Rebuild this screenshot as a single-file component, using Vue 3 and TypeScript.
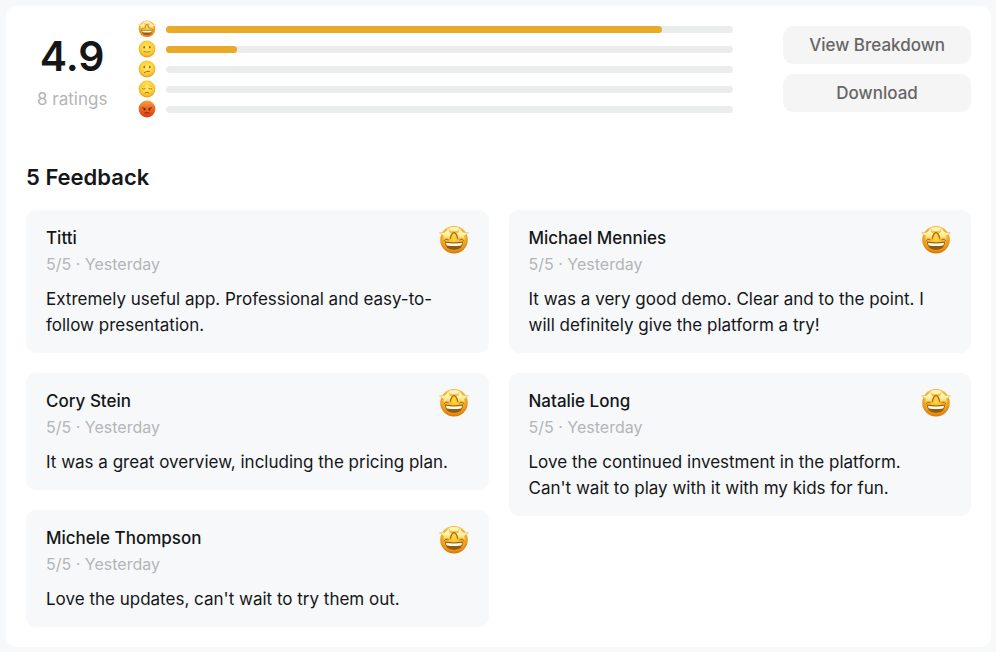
<script setup lang="ts">
import { computed } from 'vue'

type Mood = 'star' | 'smile' | 'unsure' | 'sad' | 'angry'

interface Feedback {
  name: string
  rating: number
  date: string
  text: string
}

const breakdown: { mood: Mood; label: string; count: number }[] = [
  { mood: 'star', label: '5 out of 5', count: 7 },
  { mood: 'smile', label: '4 out of 5', count: 1 },
  { mood: 'unsure', label: '3 out of 5', count: 0 },
  { mood: 'sad', label: '2 out of 5', count: 0 },
  { mood: 'angry', label: '1 out of 5', count: 0 },
]

const total = computed(() => breakdown.reduce((sum, row) => sum + row.count, 0))

const feedback: Feedback[] = [
  { name: 'Titti', rating: 5, date: 'Yesterday', text: 'Extremely useful app. Professional and easy-to-follow presentation.' },
  { name: 'Michael Mennies', rating: 5, date: 'Yesterday', text: 'It was a very good demo. Clear and to the point. I will definitely give the platform a try!' },
  { name: 'Cory Stein', rating: 5, date: 'Yesterday', text: 'It was a great overview, including the pricing plan.' },
  { name: 'Natalie Long', rating: 5, date: 'Yesterday', text: "Love the continued investment in the platform. Can't wait to play with it with my kids for fun." },
  { name: 'Michele Thompson', rating: 5, date: 'Yesterday', text: "Love the updates, can't wait to try them out." },
]

// Cards alternate between the two columns
const columns = computed(() => [0, 1].map((c) => feedback.filter((_, i) => i % 2 === c)))
</script>

<template>
  <main class="panel">
    <svg class="sprite" width="0" height="0" aria-hidden="true">
      <defs>
        <radialGradient id="ball" cx="50%" cy="42%" r="56%">
          <stop offset="0" stop-color="#ffe766" />
          <stop offset="0.55" stop-color="#ffd845" />
          <stop offset="0.85" stop-color="#f9b926" />
          <stop offset="1" stop-color="#eb981c" />
        </radialGradient>
        <radialGradient id="deep" cx="50%" cy="36%" r="64%">
          <stop offset="0" stop-color="#fbd03c" />
          <stop offset="0.5" stop-color="#f8c02f" />
          <stop offset="0.8" stop-color="#eb9a1c" />
          <stop offset="1" stop-color="#d4720c" />
        </radialGradient>
        <linearGradient id="fury" x1="0" y1="0" x2="0" y2="1">
          <stop offset="0" stop-color="#f7a33c" />
          <stop offset="0.45" stop-color="#ee6a25" />
          <stop offset="1" stop-color="#dc3a0c" />
        </linearGradient>
        <linearGradient id="gleam" x1="0" y1="0" x2="0" y2="1">
          <stop offset="0" stop-color="#fffbe0" />
          <stop offset="0.5" stop-color="#fff1a8" />
          <stop offset="1" stop-color="#fbd04a" />
        </linearGradient>
      </defs>
      <symbol id="mood-star" viewBox="0 0 30 30">
        <circle cx="15" cy="14.7" r="13.8" fill="url(#deep)" />
        <path d="M7.8 4.4Q9.6 2 15 2T22.2 4.4Q19 6 15 6T7.8 4.4Z" fill="#fff3bc" />
        <path d="M9.8 3.4L10.8 7.4L14.4 8.3L11.5 11.2L11.4 15L8.1 12.9L3.9 14.8L4.5 10.9L.5 7.8L6 7.2Z" fill="url(#gleam)" stroke="#eaa936" stroke-width=".5" stroke-linejoin="round" />
        <path d="M20.2 3.4L19.2 7.4L15.6 8.3L18.5 11.2L18.6 15L21.9 12.9L26.1 14.8L25.5 10.9L29.5 7.8L24 7.2Z" fill="url(#gleam)" stroke="#eaa936" stroke-width=".5" stroke-linejoin="round" />
        <path d="M11.3 13.4Q12.6 7.6 15 7.6T18.7 13.4" fill="none" stroke="#a9640d" stroke-width="1.2" stroke-linecap="round" />
        <path d="M13.7 10.2Q15 8.4 16.3 10.2V15.4H13.7Z" fill="#ffd23e" />
        <path d="M5 15.8Q6.4 13 9.4 14.8M25 15.8Q23.6 13 20.6 14.8" fill="none" stroke="#b06a10" stroke-width="1" stroke-linecap="round" />
        <path d="M6 16.6Q15 18.2 24 16.6Q24 24.8 15 25Q6 24.8 6 16.6Z" fill="#925a0b" />
        <path d="M7 17.7Q15 19.1 23 17.7Q23 19.8 22 20.4Q15 21.5 8 20.4Q7 19.8 7 17.7Z" fill="#fffaf0" />
      </symbol>
      <symbol id="mood-smile" viewBox="0 0 18 18">
        <circle cx="9" cy="9" r="8.4" fill="url(#ball)" />
        <ellipse cx="6.2" cy="7.3" rx=".75" ry="1.2" fill="#8d5b12" />
        <ellipse cx="11.8" cy="7.3" rx=".75" ry="1.2" fill="#8d5b12" />
        <path d="M5.9 11.6Q9 13 12.1 11.6" fill="none" stroke="#a46f18" stroke-width=".8" stroke-linecap="round" />
      </symbol>
      <symbol id="mood-unsure" viewBox="0 0 18 18">
        <circle cx="9" cy="9" r="8.4" fill="url(#ball)" />
        <ellipse cx="6.2" cy="7" rx=".75" ry="1.2" fill="#8d5b12" />
        <ellipse cx="11.8" cy="7" rx=".75" ry="1.2" fill="#8d5b12" />
        <path d="M6.4 12.5Q8 11.2 11.6 11.3" fill="none" stroke="#96600f" stroke-width=".9" stroke-linecap="round" />
      </symbol>
      <symbol id="mood-sad" viewBox="0 0 18 18">
        <circle cx="9" cy="9" r="8.4" fill="url(#ball)" />
        <path d="M4.2 8.7Q5.7 9.7 7.1 8.6M10.9 8.6Q12.3 9.7 13.8 8.7M6.9 12.9Q9 11.3 11.1 12.9" fill="none" stroke="#a46f18" stroke-width=".9" stroke-linecap="round" />
        <path d="M4 6.5Q5.6 6.2 6.6 5.2M14 6.5Q12.4 6.2 11.4 5.2" fill="none" stroke="#dba02e" stroke-width=".5" stroke-linecap="round" />
      </symbol>
      <symbol id="mood-angry" viewBox="0 0 18 18">
        <circle cx="9" cy="9" r="8.4" fill="url(#fury)" />
        <ellipse cx="6.4" cy="9.6" rx=".8" ry="1" fill="#5a1d08" />
        <ellipse cx="11.6" cy="9.6" rx=".8" ry="1" fill="#5a1d08" />
        <path d="M4.4 7.7Q6.4 7.8 7.7 9M13.6 7.7Q11.6 7.8 10.3 9M7 13Q9 11.9 11 13" fill="none" stroke="#74260c" stroke-width=".9" stroke-linecap="round" />
      </symbol>
    </svg>

    <section class="summary" aria-label="Rating summary">
      <div class="score">
        <strong class="score-value">4.9</strong>
        <span class="score-count">{{ total }} ratings</span>
      </div>
      <ul class="breakdown">
        <li v-for="row in breakdown" :key="row.mood" class="row">
          <svg class="mood" role="img" :aria-label="row.label"><use :href="`#mood-${row.mood}`" /></svg>
          <div class="track">
            <div v-if="row.count" class="fill" :style="{ width: `${(row.count / total) * 100}%` }"></div>
          </div>
        </li>
      </ul>
      <div class="actions">
        <button type="button" class="action">View Breakdown</button>
        <button type="button" class="action">Download</button>
      </div>
    </section>

    <h2 class="title">{{ feedback.length }} Feedback</h2>

    <section class="columns" aria-label="Feedback">
      <div v-for="(column, c) in columns" :key="c" class="column">
        <article v-for="item in column" :key="item.name" class="card">
          <header class="card-head">
            <div>
              <h3 class="name">{{ item.name }}</h3>
              <p class="meta">{{ item.rating }}/5 · {{ item.date }}</p>
            </div>
            <svg class="badge" role="img" aria-label="Star-struck"><use href="#mood-star" /></svg>
          </header>
          <p class="text">{{ item.text }}</p>
        </article>
      </div>
    </section>
  </main>
</template>

<style>
body {
  background: #f7f8fa;
}
</style>

<style scoped>
.panel {
  margin: 6px 5px 5px 6px;
  padding: 13px 20px 20px;
  border-radius: 10px;
  background: #fff;
  color: #141618;
  font-family: Inter, 'Liberation Sans', sans-serif;
  font-size: 17px;
  line-height: 26px;
}

.sprite {
  display: block;
}

.summary {
  display: flex;
  align-items: center;
}

.score {
  display: flex;
  flex-direction: column;
  align-items: center;
  padding: 0 11px;
  margin-right: 20px;
}

.score-value {
  font-size: 41px;
  font-weight: 600;
  line-height: 60px;
}

.score-count {
  color: #b4b5b6;
  white-space: nowrap;
}

.breakdown {
  flex: 1;
  margin: 0;
  padding: 0;
  list-style: none;
}

.row {
  display: flex;
  align-items: center;
  gap: 10px;
  height: 20px;
}

.mood {
  flex: none;
  width: 18px;
  height: 18px;
}

.track {
  flex: 1;
  height: 7px;
  border-radius: 4px;
  background: #ebeded;
}

.fill {
  height: 100%;
  border-radius: 4px;
  background: #e9aa28;
}

.actions {
  display: flex;
  flex-direction: column;
  gap: 10px;
  margin-left: 50px;
}

.action {
  padding: 6px 26px;
  border: 0;
  border-radius: 10px;
  background: #f5f5f5;
  color: #666;
  font: inherit;
  font-weight: 500;
  cursor: pointer;
}

.title {
  margin: 43px 0 18px;
  font-size: 22px;
  font-weight: 600;
  line-height: 30px;
}

.columns {
  display: grid;
  grid-template-columns: repeat(2, minmax(0, 1fr));
  gap: 20px;
}

.column {
  display: flex;
  flex-direction: column;
  gap: 20px;
}

.card {
  padding: 15px 20px;
  border-radius: 10px;
  background: #f7f8fa;
}

.card-head {
  display: flex;
  justify-content: space-between;
  align-items: flex-start;
  margin-bottom: 9px;
}

.name {
  margin: 0;
  font-size: 17px;
  font-weight: 500;
}

.meta {
  margin: 0;
  color: #b4b5b6;
  font-size: 16px;
}

.badge {
  flex: none;
  width: 30px;
  height: 30px;
}

.text {
  margin: 0;
  padding-right: 8px;
}
</style>
